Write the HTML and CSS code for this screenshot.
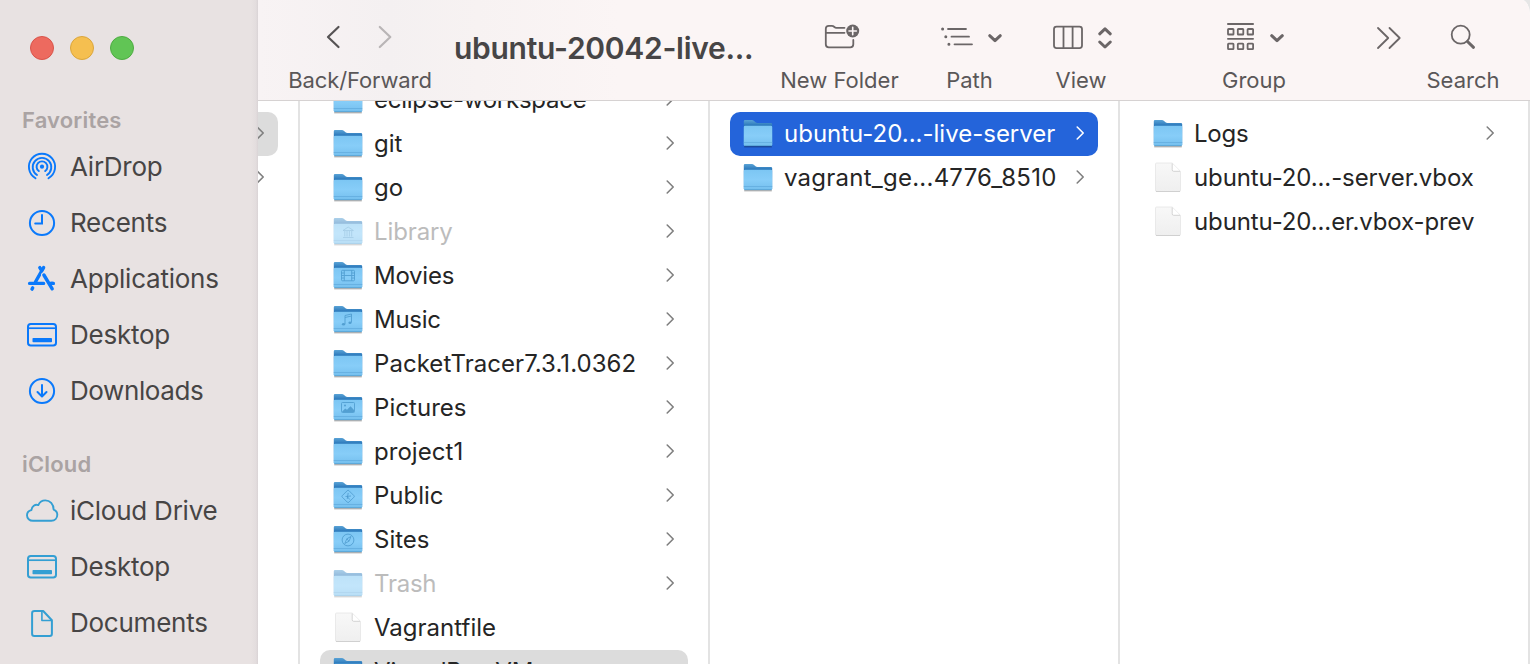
FILE: index.html
```html
<!DOCTYPE html>
<html lang="en">
<head>
<meta charset="utf-8">
<title>Finder</title>
<link rel="stylesheet" href="styles.css">
</head>
<body>
<svg class="defs" width="0" height="0" aria-hidden="true">
  <defs>
    <linearGradient id="back" x1="0" y1="0" x2="0" y2="1"><stop offset="0" stop-color="#5aa3d6"/><stop offset=".24" stop-color="#2674b8"/><stop offset="1" stop-color="#4c9fd8"/></linearGradient>
    <linearGradient id="front" x1="0" y1="0" x2="0" y2="1"><stop offset="0" stop-color="#7cc6f3"/><stop offset=".5" stop-color="#87cdf8"/><stop offset="1" stop-color="#74bfee"/></linearGradient>
    <linearGradient id="paper" x1="0" y1="0" x2="0" y2="1"><stop offset="0" stop-color="#f8f8f8"/><stop offset="1" stop-color="#efefef"/></linearGradient>
    <symbol id="folder" viewBox="0 0 30 30">
      <path d="M1.200 28.700h27.600" stroke="#000" stroke-opacity=".3" stroke-width="1.400"/>
      <path d="M.8 27V3.200Q.8 2 2 2H9q1 0 1.800.8l1.700 1.500q.8.700 1.900.7h13.500q1.300 0 1.300 1.300V27z" fill="url(#back)"/>
      <path d="M.8 9Q.8 7.700 2.100 7.700h25.800q1.300 0 1.300 1.300v17.700q0 1.300-1.300 1.300H2.100Q.8 28 .8 26.700z" fill="url(#front)"/>
      <path d="M.8 24.500h28.400" stroke="#62acde" stroke-width=".8"/>
      <path d="M1.300 27.600h27.400" stroke="#559fd0" stroke-width=".8"/>
    </symbol>
    <symbol id="file" viewBox="0 0 30 30">
      <path d="M3.500 1h15.700l8.300 8.300v18.900q0 1.300-1.300 1.300H3.800q-1.300 0-1.300-1.300V2q0-1 1-1z" fill="url(#paper)" stroke="#e2e2e2" stroke-width=".7"/>
      <path d="M3 29.500h24" stroke="#c9c9c9" stroke-width=".8"/>
      <path d="M19.200 1.500v6.300q0 1.500 1.500 1.500h6.300z" fill="#fff"/>
      <path d="M19.200 1.500v6.300q0 1.500 1.500 1.500h6.300" fill="none" stroke="#c9c9c9" stroke-width=".8"/>
    </symbol>
    <symbol id="chev" viewBox="0 0 10 16"><path d="M2.200 2 8.200 8l-6 6" fill="none" stroke="currentColor" stroke-width="1.600" stroke-linecap="round" stroke-linejoin="round"/></symbol>
    <symbol id="desktop" viewBox="0 0 36 32">
      <rect x="4" y="5" width="28" height="21.500" rx="2.800" fill="none" stroke="currentColor" stroke-width="2"/>
      <path d="M4 9.200h28" stroke="currentColor" stroke-width="1.700"/>
      <rect x="8.500" y="19" width="19.500" height="4.200" rx=".8" fill="currentColor"/>
    </symbol>
  </defs>
</svg>
<div class="window">
  <aside class="sidebar">
    <div class="lights"><i class="light red"></i><i class="light yellow"></i><i class="light green"></i></div>
    <h2 class="section">Favorites</h2>
    <ul class="places">
      <li class="place"><svg class="picon" viewBox="0 0 36 32" fill="none" stroke="currentColor" stroke-width="1.900" stroke-linecap="round"><circle cx="18" cy="15.700" r="2.100" fill="currentColor" stroke="none"/><path d="M14.800 20.100a5.400 5.400 0 1 1 6.400 0M13 24a9.300 9.300 0 1 1 10 0M11.500 27.200a13.100 13.100 0 1 1 13 0"/></svg><span>AirDrop</span></li>
      <li class="place"><svg class="picon" viewBox="0 0 36 32" fill="none" stroke="currentColor" stroke-width="2" stroke-linecap="round"><circle cx="18" cy="16" r="12.100"/><path d="M18 8v8.400h-6.800"/></svg><span>Recents</span></li>
      <li class="place"><svg class="picon" viewBox="0 0 36 32" fill="none" stroke="currentColor" stroke-width="3.400" stroke-linecap="round"><path d="M15.800 4.600l2 3.200M19.600 4.600 11.400 19M5.600 20.400h14M25 20.400h4.200M8.700 24.900l-.7 1.200"/><path class="gap" d="M19.600 11.800 28.600 26" stroke-width="5"/><path d="M19.900 12 28.200 25.800M25.500 20.400h3.700"/></svg><span>Applications</span></li>
      <li class="place"><svg class="picon"><use href="#desktop"/></svg><span>Desktop</span></li>
      <li class="place"><svg class="picon" viewBox="0 0 36 32" fill="none" stroke="currentColor" stroke-width="2" stroke-linecap="round" stroke-linejoin="round"><circle cx="18" cy="16" r="12.100"/><path d="M18 10v11M13.500 17l4.500 4.500 4.500-4.500"/></svg><span class="tight">Downloads</span></li>
    </ul>
    <h2 class="section cloud-title">iCloud</h2>
    <ul class="places cloud">
      <li class="place"><svg class="picon" viewBox="0 0 36 32" fill="none" stroke="currentColor" stroke-width="1.900" stroke-linejoin="round"><path d="M9 25.800C5.500 25.800 3 23.400 3 20.300c0-2.700 1.800-4.700 4.500-5.200C7.600 11.200 11.200 9 14.300 10.100 15.600 7.200 18.300 5.400 21.300 5.400c4.700 0 8.300 3.800 8.300 9.200 2.200.8 3.700 2.800 3.700 5.200 0 3.400-2.500 6-6 6z"/></svg><span>iCloud Drive</span></li>
      <li class="place"><svg class="picon"><use href="#desktop"/></svg><span>Desktop</span></li>
      <li class="place"><svg class="picon" viewBox="0 0 36 32" fill="none" stroke="currentColor" stroke-width="2" stroke-linejoin="round"><path d="M10.500 4h8.700l8.700 9.200v13.600q0 2.200-2.200 2.200H10.300q-2.200 0-2.200-2.200V6.200Q8.100 4 10.500 4z"/><path d="M17.900 4v9.500h9.900" stroke-width="1.600"/></svg><span>Documents</span></li>
    </ul>
  </aside>
  <main class="main">
    <header class="toolbar">
      <div class="tool">
        <svg class="ticon" width="172" height="66" viewBox="274 0 172 66"><path d="M338.500 27 328 37l10.500 10" stroke="#565354"/><path d="M379.800 27 390.300 37l-10.500 10" stroke="#b9b5b6"/></svg>
        <span class="label-back">Back/Forward</span>
      </div>
      <h1 class="title">ubuntu-20042-live...</h1>
      <div class="tool">
        <svg class="ticon thin" width="151" height="66" viewBox="764 0 151 66"><path d="M844.500 27.800h-8.200q-1 0-1.900-.8-1.200-1.200-2.600-1.200h-3q-3 0-3 3v15.500q0 3 3 3h21.500q3 0 3-3V40M826 32.800h18.500"/><circle class="badge" cx="852.700" cy="31" r="6.500"/><path class="plus" d="M852.700 27.300v7.400M849 31h7.400"/></svg>
        <span>New Folder</span>
      </div>
      <div class="tool">
        <svg class="ticon thin" width="109" height="66" viewBox="915 0 109 66"><path d="M948 29h18M951.500 36.700h17.500M954.500 44.300h17.500"/><path class="bold" d="M942.600 29h.01M945.800 36.700h.01M948.900 44.300h.01M989.700 35.700l5.300 5 5.300-5"/></svg>
        <span>Path</span>
      </div>
      <div class="tool">
        <svg class="ticon thin" width="114" height="66" viewBox="1024 0 114 66"><rect x="1054" y="26.600" width="28" height="21.500" rx="2.500"/><path d="M1063.500 27v21M1072.600 27v21"/><path class="bold" d="m1099.700 33.800 5.300-5 5.300 5M1099.700 42l5.300 5 5.300-5"/></svg>
        <span>View</span>
      </div>
      <div class="tool">
        <svg class="ticon thin" width="232" height="66" viewBox="1138 0 232 66"><path d="M1227.900 24h25.200M1227.900 38.800h25.200"/><rect x="1228" y="29" width="5.500" height="5.500" rx=".6"/><rect x="1237.800" y="29" width="5.500" height="5.500" rx=".6"/><rect x="1247.600" y="29" width="5.500" height="5.500" rx=".6"/><rect x="1228" y="43.600" width="5.500" height="5.500" rx=".6"/><rect x="1237.800" y="43.600" width="5.500" height="5.500" rx=".6"/><rect x="1247.600" y="43.600" width="5.500" height="5.500" rx=".6"/><path class="bold" d="m1271.700 35.700 5.300 5 5.300-5"/></svg>
        <span>Group</span>
      </div>
      <div class="tool">
        <svg class="ticon thin" width="37" height="66" viewBox="1370 0 37 66"><path d="m1378 28 10.200 10-10.200 10M1389.500 28l10.200 10-10.200 10"/></svg>
      </div>
      <div class="tool">
        <svg class="ticon thin" width="112" height="66" viewBox="1407 0 112 66"><circle cx="1460.700" cy="34.700" r="9"/><path class="bold" d="m1467.500 41.500 6 5.800"/></svg>
        <span>Search</span>
      </div>
    </header>
    <div class="columns">
      <section class="col stub">
        <div class="row picked"><svg class="chev"><use href="#chev"/></svg></div>
        <div class="row"><svg class="chev"><use href="#chev"/></svg></div>
      </section>
      <section class="col scrolled">
        <div class="row"><svg class="icon"><use href="#folder"/></svg><span class="name tight">eclipse-workspace</span><svg class="chev"><use href="#chev"/></svg></div>
        <div class="row"><svg class="icon"><use href="#folder"/></svg><span class="name even">git</span><svg class="chev"><use href="#chev"/></svg></div>
        <div class="row"><svg class="icon"><use href="#folder"/></svg><span class="name even">go</span><svg class="chev"><use href="#chev"/></svg></div>
        <div class="row dim"><svg class="icon" viewBox="0 0 30 30"><use href="#folder"/><g class="glyph"><path d="M10 14.500 15.200 11l5.200 3.500zM10 21.500h10.500M11.800 15v5.500M14 15v5.500M16.400 15v5.500M18.700 15v5.500"/></g></svg><span class="name">Library</span><svg class="chev"><use href="#chev"/></svg></div>
        <div class="row"><svg class="icon" viewBox="0 0 30 30"><use href="#folder"/><g class="glyph"><rect x="8.500" y="10.300" width="13" height="10.500" rx="1"/><path d="M11.300 10.300v10.500M18.700 10.300v10.500M11.300 15.500h7.400M8.500 13h2.800M8.500 15.500h2.800M8.500 18h2.800M18.700 13h2.800M18.700 15.500h2.800M18.700 18h2.800"/></g></svg><span class="name tight">Movies</span><svg class="chev"><use href="#chev"/></svg></div>
        <div class="row"><svg class="icon" viewBox="0 0 30 30"><use href="#folder"/><g class="glyph"><path d="M12 20v-8.500l6.500-1.500v8.500M12 13.500l6.500-1.500"/><ellipse class="solid" cx="10.500" cy="20.300" rx="1.600" ry="1.200"/><ellipse class="solid" cx="17" cy="18.800" rx="1.600" ry="1.200"/></g></svg><span class="name tight">Music</span><svg class="chev"><use href="#chev"/></svg></div>
        <div class="row"><svg class="icon"><use href="#folder"/></svg><span class="name loose">PacketTracer7.3.1.0362</span><svg class="chev"><use href="#chev"/></svg></div>
        <div class="row"><svg class="icon" viewBox="0 0 30 30"><use href="#folder"/><g class="glyph"><rect x="8.500" y="10.500" width="13" height="10" rx="1"/><path class="solid" d="m9 19.800 3.200-3.300 1.800 1.300 3.500-3.500 3.500 3.800v1.900H9z"/><circle class="solid" cx="12" cy="13.500" r="1"/></g></svg><span class="name loose">Pictures</span><svg class="chev"><use href="#chev"/></svg></div>
        <div class="row"><svg class="icon"><use href="#folder"/></svg><span class="name loose">project1</span><svg class="chev"><use href="#chev"/></svg></div>
        <div class="row"><svg class="icon" viewBox="0 0 30 30"><use href="#folder"/><g class="glyph"><path d="m14.300 10.600-5 5q-.8.800 0 1.600l5 5q.8.800 1.600 0l5-5q.8-.8 0-1.600l-5-5q-.8-.8-1.600 0zM15.200 13l-1 6M12.500 16.500l5.500-.5M14.700 17l2 2.500"/></g></svg><span class="name even">Public</span><svg class="chev"><use href="#chev"/></svg></div>
        <div class="row"><svg class="icon" viewBox="0 0 30 30"><use href="#folder"/><g class="glyph"><circle cx="15" cy="16" r="5.900"/><path d="m18 12.500-4.200 2.300-2 4.700 4.200-2.300zM13.800 14.800l2.200 2.400"/></g></svg><span class="name even">Sites</span><svg class="chev"><use href="#chev"/></svg></div>
        <div class="row dim"><svg class="icon"><use href="#folder"/></svg><span class="name tight">Trash</span><svg class="chev"><use href="#chev"/></svg></div>
        <div class="row"><svg class="icon"><use href="#file"/></svg><span class="name even">Vagrantfile</span></div>
        <div class="row picked"><svg class="icon"><use href="#folder"/></svg><span class="name">VirtualBox VMs</span><svg class="chev"><use href="#chev"/></svg></div>
      </section>
      <section class="col">
        <div class="row selected"><svg class="icon"><use href="#folder"/></svg><span class="name even">ubuntu-20...-live-server</span><svg class="chev"><use href="#chev"/></svg></div>
        <div class="row"><svg class="icon"><use href="#folder"/></svg><span class="name wide">vagrant_ge...4776_8510</span><svg class="chev"><use href="#chev"/></svg></div>
      </section>
      <section class="col">
        <div class="row"><svg class="icon"><use href="#folder"/></svg><span class="name tight">Logs</span><svg class="chev"><use href="#chev"/></svg></div>
        <div class="row"><svg class="icon"><use href="#file"/></svg><span class="name">ubuntu-20...-server.vbox</span></div>
        <div class="row"><svg class="icon"><use href="#file"/></svg><span class="name">ubuntu-20...er.vbox-prev</span></div>
      </section>
    </div>
  </main>
</div>
</body>
</html>
```
FILE: styles.css
```css
* { box-sizing: border-box; }
body { margin: 0; background: #e6e6e6; font-family: Inter, "Liberation Sans", sans-serif; overflow: hidden; }
h1, h2, ul { margin: 0; padding: 0; }
svg { display: block; flex: none; }
.defs { position: absolute; }
.window { display: flex; width: 1530px; height: 664px; overflow: hidden; border-top-right-radius: 8px 15px; background: #fff; }

.sidebar { flex: none; width: 258px; height: 664px; overflow: hidden; background: linear-gradient(90deg, #e8e2e2 251px, #e3ddde 256px, #d9d3d5 258px); }
.lights { display: flex; gap: 16px; height: 101px; padding: 36px 0 0 30px; }
.light { width: 24px; height: 24px; border-radius: 50%; border: 1px solid; }
.red { background: #ed6a5f; border-color: #d9544a; }
.yellow { background: #f5bf50; border-color: #dba63c; }
.green { background: #61c555; border-color: #4eac42; }
.section { height: 38px; padding-left: 22px; font-size: 22px; font-weight: 600; line-height: 38px; color: #aaa3a3; letter-spacing: .17px; }
.cloud-title { margin-top: 26px; }
.places { list-style: none; color: #0a79fb; }
.cloud { color: #349fd3; }
.place { display: flex; align-items: center; height: 56px; padding-left: 24px; gap: 10px; white-space: nowrap; font-size: 26px; line-height: 32px; letter-spacing: -.24px; }
.place span { color: #474545; }
.place .tight { letter-spacing: -.4px; }
.picon { width: 36px; height: 32px; }
.gap { stroke: #e8e2e2; }

.main { flex: 1; min-width: 0; }
.toolbar { display: grid; grid-template-columns: 172px 318px 151px 109px 114px 232px 37px 112px; height: 101px; padding-left: 16px; border-bottom: 1px solid #d6d2d2; background: linear-gradient(90deg, #f8f3f4, #f4f0f1 130px, #f7f2f2 220px, #fbf5f5 360px); color: #5a5758; }
.tool { display: flex; flex-direction: column; align-items: center; font-size: 22px; line-height: 28px; white-space: nowrap; }
.label-back { letter-spacing: -.1px; }
.ticon { fill: none; stroke: #6b6667; stroke-width: 2.2; stroke-linejoin: round; stroke-linecap: round; }
.thin { stroke-width: 1.8; }
.bold { stroke-width: 3; }
.badge { fill: #6b6667; stroke: none; }
.plus { stroke: #fbf5f5; stroke-width: 1.6; }
.title { padding: 28px 0 0 8px; font-size: 30px; line-height: 40px; font-weight: 600; letter-spacing: -.28px; color: #474546; white-space: nowrap; }

.columns { display: flex; height: 563px; overflow: hidden; }
.col { flex: none; width: 410px; padding: 11px 20px 0; border-right: 2px solid #e3e3e3; }
.scrolled { padding-top: 0; }
.scrolled .row:first-child { margin-top: -23px; }
.row { display: flex; align-items: center; width: 368px; height: 44px; padding: 0 13px; border-radius: 10px; font-size: 24px; line-height: 30px; color: #252525; white-space: nowrap; }
.stub { width: 42px; padding: 11px 20px 0 0; }
.stub .row { width: 20px; padding: 0 13px 0 0; justify-content: flex-end; border-radius: 0 10px 10px 0; }
.icon { width: 30px; height: 30px; margin: 0 11px 2px 0; }
.name { flex: 1; letter-spacing: -.11px; }
.name.even { letter-spacing: 0; }
.name.tight { letter-spacing: -.25px; }
.name.loose { letter-spacing: .05px; }
.name.wide { letter-spacing: .24px; }
.chev { width: 10px; height: 16px; margin-top: -3px; color: #7f7f7f; }
.picked { background: #dcdcdc; }
.selected { background: #2464da; color: #fff; }
.selected .chev { color: #fff; }
.dim .icon { opacity: .5; }
.dim .name { color: #bcbcbc; }
.glyph { fill: none; stroke: #4291c6; stroke-width: .9; opacity: .75; }
.solid { fill: #4291c6; stroke: none; }
```
